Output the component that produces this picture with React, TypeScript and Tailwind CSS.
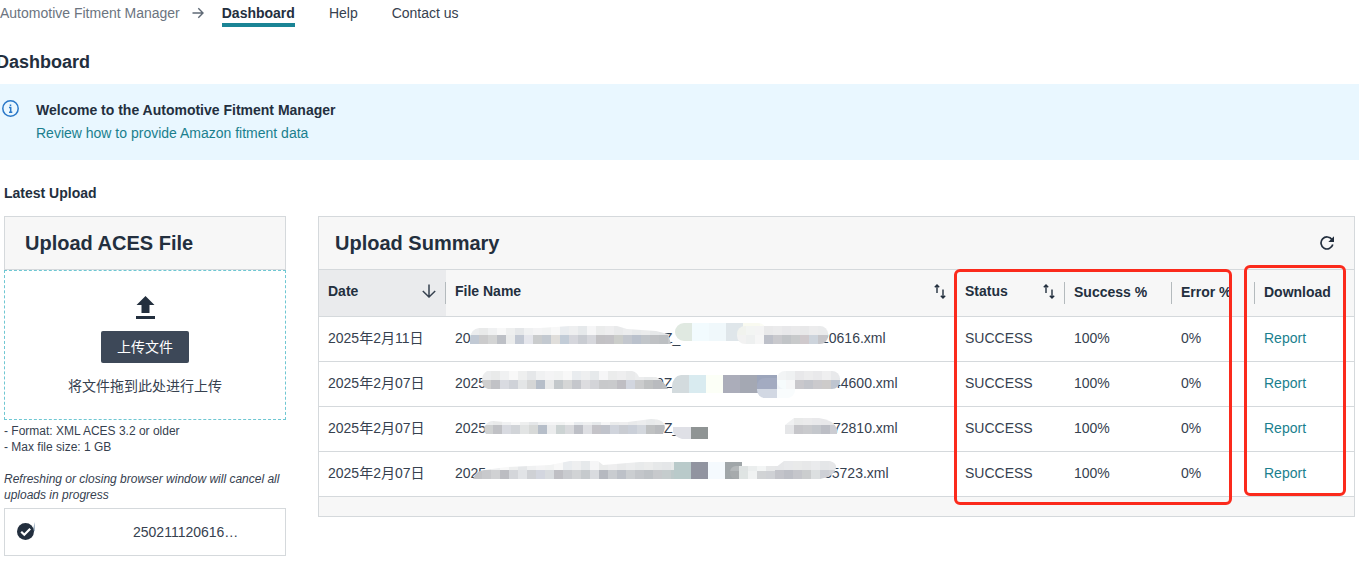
import React from 'react';

type Band = { h: number; colors: string[] };

type Strip = {
  x: number;
  y: number;
  w: number;
  cell: number;
  rx: number;
  // irregular edge, used instead of the rounded rectangle
  outline?: string;
  bands: Band[];
};

type Upload = {
  id: string;
  date: string;
  // visible pieces of the file name, each with the space it takes up
  name: { text: string; width: number }[];
  strips: Strip[];
};

const LIGHT = [
  '#ecedee', '#e9eaea', '#f0f1f2', '#f8f8f8', '#eeefef', '#e5e7e9', '#f0f1f2', '#f4f4f5',
  '#f2f3f3', '#f8f8f8', '#e9ecef', '#eeeff0', '#e6e9eb', '#f6f6f7', '#ebecec', '#eeeeef',
  '#e9eaeb', '#ecedee', '#e8eaeb', '#ebecec', '#e6e8e9', '#e4e6e8', '#e8eaea',
];

const uploads: Upload[] = [
  {
    id: 'u1',
    date: '2025年2月11日',
    name: [
      { text: '2025', width: 209 },
      { text: 'Z_', width: 157 },
      { text: '20616.xml', width: 66 },
    ],
    strips: [
      {
        x: 24, y: 9, w: 201, cell: 9, rx: 0,
        outline: 'M24 27V21Q25 12 33 11H94L124 9H171L181 12L210 14L222 17L225 27L222 32V27Z',
        bands: [
          { h: 9, colors: LIGHT },
          {
            h: 9,
            colors: [
              '#c1c9d4', '#cbcbcc', '#d3d4d4', '#bdc0c6', '#ebecec', '#c2c8d3', '#e5e6ec', '#cacccd',
              '#c3c9d0', '#e0dedb', '#c2ccd7', '#d5d6dc', '#c9ccd2', '#d6d7dc', '#c2c1c4', '#c3c2c6',
              '#cbcdca', '#c3c7ce', '#bac1cc', '#c1c5c9', '#bfc1c4', '#bcbfc2', '#c6c9cc',
            ],
          },
        ],
      },
      {
        x: 229, y: 6, w: 92, cell: 17, rx: 9,
        bands: [{ h: 18, colors: ['#e0e9e1', '#f2fbfe', '#f0f8fb', '#dfe6ea', '#f9faf0', '#fbfcf5'] }],
      },
      {
        x: 291, y: 9, w: 91, cell: 9, rx: 8,
        bands: [
          { h: 9, colors: ['#f1f3ee', '#f3f5f3', '#f4f4f4', '#e9e9ea', '#ebebec', '#e8e8ea', '#eaeaeb', '#e8e8e9', '#ececed', '#eaebec', '#e8e9ea'] },
          { h: 9, colors: ['#f2f2f2', '#eef0f0', '#f6f6f6', '#bdc0c9', '#c9c9cd', '#c1c4c7', '#c8cacb', '#cfc9cc', '#cdd4dc', '#c6c6ca', '#c9cacd'] },
        ],
      },
    ],
  },
  {
    id: 'u2',
    date: '2025年2月07日',
    name: [
      { text: '2025', width: 201 },
      { text: '9Z', width: 177 },
      { text: '44600.xml', width: 66 },
    ],
    strips: [
      {
        x: 36, y: 9, w: 186, cell: 9, rx: 0,
        outline: 'M42 27Q36 25 36 18Q36 12 41 9H186Q191 10 193 15L210 15Q218 19 222 27Z',
        bands: [
          { h: 9, colors: LIGHT },
          {
            h: 9,
            colors: [
              '#cfcfcf', '#c1c2c6', '#d9dbe1', '#cfd2d8', '#e3e5e6', '#d5d6d6', '#b6bec9', '#e9eaea',
              '#c3c8cb', '#d5d6d6', '#c5c7cc', '#dcdcdf', '#d3d4d8', '#c8c9cb', '#c9cacc', '#bfbec3',
              '#d2d6df', '#cbcccd', '#bfc1c2', '#b9bbbf', '#bcbec0',
            ],
          },
        ],
      },
      {
        x: 226, y: 13, w: 104, cell: 17, rx: 0,
        outline: 'M226 31V24Q227 14 235 13H331V31Z',
        bands: [{ h: 18, colors: ['#d3dbde', '#d9ebf0', '#fcfff7', '#abadba', '#a4a8b3', '#9ca5bb', '#9ca5bb'] }],
      },
      {
        x: 311, y: 16, w: 38, cell: 20, rx: 8,
        bands: [
          { h: 11, colors: ['#a3abc1', '#f0f4f8'] },
          { h: 9, colors: ['#d2d8e3', '#f9fcfd'] },
        ],
      },
      {
        x: 331, y: 9, w: 63, cell: 9, rx: 8,
        bands: [
          { h: 9, colors: ['#f2f4f5', '#eff1f2', '#e8e8ea', '#ececed', '#e9e9eb', '#efeff0', '#e8e9eb'] },
          { h: 9, colors: ['#f6fbfc', '#f6f7f8', '#c9c8cc', '#c3c5cb', '#cbcacd', '#cdcbca', '#bec5d0'] },
        ],
      },
    ],
  },
  {
    id: 'u3',
    date: '2025年2月07日',
    name: [
      { text: '2025', width: 209 },
      { text: 'Z_', width: 169 },
      { text: '72810.xml', width: 66 },
    ],
    strips: [
      {
        x: 38, y: 12, w: 181, cell: 9, rx: 0,
        outline: 'M40 27Q37 23 39 19Q42 14 47 14L58 15H182L205 12Q219 12 219 21L217 27Z',
        bands: [
          { h: 6, colors: LIGHT },
          {
            h: 9,
            colors: [
              '#cfd1d1', '#c0c1c5', '#d8dae0', '#d1d4d8', '#e2e4e4', '#d7d9d8', '#b6bec9', '#ebeced',
              '#ccd3d3', '#d9dadd', '#bdbfc6', '#dedfe3', '#c4c3c8', '#c0c3cb', '#d0d4dc', '#c9ccd2',
              '#cacfd8', '#d3d7dd', '#bfc1c2', '#b9bbbe', '#c3c5c7',
            ],
          },
        ],
      },
      {
        x: 227, y: 20, w: 35, cell: 18, rx: 0,
        outline: 'M227 20H262V32H236Q229 30 227 25Z',
        bands: [{ h: 12, colors: ['#dfe0e6', '#8f9494'] }],
      },
      {
        x: 339, y: 11, w: 52, cell: 9, rx: 0,
        outline: 'M339 27V18L348 11H373Q388 13 391 22V27Z',
        bands: [
          { h: 7, colors: ['#f0f1f2', '#e9eaea', '#ebebec', '#e9e9eb', '#e8e8ea', '#e6e7e9'] },
          { h: 9, colors: ['#e5e6e8', '#c6c6ca', '#c9cacd', '#c4c7cc', '#bcbec5', '#cbccd2'] },
        ],
      },
    ],
  },
  {
    id: 'u4',
    date: '2025年2月07日',
    name: [
      { text: '2025', width: 369 },
      { text: '35723.xml', width: 66 },
    ],
    strips: [
      {
        x: 27, y: 9, w: 206, cell: 9, rx: 0,
        outline: 'M27 27Q29 19 38 18L61 15L104 13L124 9H152L157 13L194 10H232V27Z',
        bands: [
          { h: 9, colors: LIGHT },
          {
            h: 9,
            colors: [
              '#c3c4c7', '#c8c9cc', '#d0d1d3', '#bcbdc2', '#d4d6da', '#e1e3e6', '#cfd1d5', '#d3d6df',
              '#d9dcdf', '#bfbfc4', '#c9cbcf', '#d1d3d5', '#c6cacd', '#d9dbdf', '#b6b9c0', '#c9ccd0',
              '#bdc1c8', '#cbced1', '#c3c6ca', '#bec2c6', '#c7c9cc', '#c5cccd', '#bdc9ca',
            ],
          },
        ],
      },
      {
        x: 228, y: 10, w: 68, cell: 17, rx: 0,
        bands: [{ h: 17, colors: ['#b9caca', '#9194a0', '#f5fafe', '#a0a6a9'] }],
      },
      {
        x: 284, y: 14, w: 60, cell: 9, rx: 6,
        bands: [
          { h: 5, colors: ['#b4b8ba', '#dfe3e3', '#ebeeee', '#f3f5f5', '#e7e8e9', '#e6e7e8', '#e5e6e8'] },
          { h: 8, colors: ['#a7abad', '#dfe4e3', '#f0f2f2', '#d1d3d5', '#cfd1d5', '#c5c6ca', '#cacbce'] },
        ],
      },
      {
        x: 329, y: 9, w: 61, cell: 9, rx: 0,
        outline: 'M329 27V16L338 9H384Q391 11 390 16Q388 24 378 26L374 27Z',
        bands: [
          { h: 9, colors: ['#e6e7e9', '#e8e9eb', '#e9eaea', '#e7e8e9', '#eaebed', '#e4e6e8', '#e6e7e9'] },
          { h: 9, colors: ['#c3c4ca', '#bdbfc6', '#c5c6cb', '#cbcdce', '#dcdfe0', '#ced0d6', '#d3d4d8'] },
        ],
      },
    ],
  },
];

const Mosaic: React.FC<{ id: string; strips: Strip[] }> = ({ id, strips }) => (
  <svg
    className="absolute left-0 top-0 pointer-events-none"
    width="450"
    height="44"
    aria-hidden="true"
  >
    {strips.map((s, i) => {
      const height = s.bands.reduce((sum, b) => sum + b.h, 0);
      let top = s.y;
      return (
        <g key={i} clipPath={`url(#${id}-${i})`} shapeRendering="crispEdges">
          <clipPath id={`${id}-${i}`}>
            {s.outline ? (
              <path d={s.outline} />
            ) : (
              <rect x={s.x} y={s.y} width={s.w} height={height} rx={s.rx} />
            )}
          </clipPath>
          {s.bands.map((band, b) => {
            const y = top;
            top += band.h;
            return band.colors.map((color, c) => (
              <rect
                key={`${b}-${c}`}
                x={s.x + c * s.cell}
                y={y}
                width={s.cell}
                height={band.h}
                fill={color}
              />
            ));
          })}
        </g>
      );
    })}
  </svg>
);

const SortIcon = () => (
  <svg width="12" height="15" viewBox="0 0 12 15" fill="none" stroke="#232f3e" strokeWidth="1.4">
    <path d="M3 9V1.5M0.8 3.3L3 1L5.2 3.3" />
    <path d="M9 5.5V13.5M6.8 11.7L9 14L11.2 11.7" />
  </svg>
);

const ArrowDownIcon = () => (
  <svg width="14" height="14" viewBox="0 0 14 14" fill="none" stroke="#36414f" strokeWidth="1.5">
    <path d="M7 0.5V13M0.8 7L7 13L13.2 7" />
  </svg>
);

const HeaderCell: React.FC<{
  label: string;
  icon?: React.ReactNode;
  divider?: boolean;
  active?: boolean;
}> = ({ label, icon, divider, active }) => (
  <th
    scope="col"
    className={`p-0 py-3 text-left font-bold text-[#232f3e] ${active ? 'bg-[#eaebed]' : ''}`}
  >
    <div
      className={`flex h-[22px] items-start justify-between whitespace-nowrap pl-[9px] ${
        icon ? 'leading-[18px]' : 'leading-5'
      } ${divider ? 'border-r border-[#b4babd]' : ''}`}
    >
      {label}
      {icon && (
        <button type="button" aria-label={`Sort by ${label}`} className="mr-[9px] pt-0.5">
          {icon}
        </button>
      )}
    </div>
  </th>
);

const Cell: React.FC<{ children: React.ReactNode }> = ({ children }) => (
  <td className="pt-[11px] pb-[13px] pl-[9px] leading-5">{children}</td>
);

const UploadPanel = () => (
  <section className="w-[282px] shrink-0">
    <div className="border border-[#d5d9dc] bg-[#f7f7f7] px-5 py-3">
      <h2 className="text-xl font-bold leading-7 text-[#232f3e]">Upload ACES File</h2>
    </div>
    <div className="flex flex-col items-center border border-dashed border-[#6fc7d2] pt-[25px] pb-[23px]">
      <svg width="19" height="23" viewBox="0 0 19 23" fill="#232f3e" aria-hidden="true">
        <path d="M9.5 0L18.5 9H13.5V17H5.5V9H0.5Z" />
        <rect y="20" width="19" height="3" />
      </svg>
      <button
        type="button"
        className="mt-3 rounded-xs bg-[#3d4858] px-4 py-1.5 leading-5 text-white"
      >
        上传文件
      </button>
      <p className="mt-[13px] leading-5">将文件拖到此处进行上传</p>
    </div>
    <div className="mt-[3px] text-xs leading-4">
      <p>- Format: XML ACES 3.2 or older</p>
      <p>- Max file size: 1 GB</p>
      <p className="mt-4 italic">
        Refreshing or closing browser window will cancel all uploads in progress
      </p>
    </div>
    <div className="mt-[5px] flex items-center border border-[#d5d9dc] px-3 py-[13px]">
      <svg width="19" height="20" viewBox="0 0 19 20" aria-label="Uploaded" role="img">
        <path d="M18 0V9L15 10Z" fill="#a9b9c8" />
        <circle cx="8.5" cy="9.5" r="8.5" fill="#232f3e" />
        <path d="M4.2 9.7L7.3 12.8L13.2 6.7" fill="none" stroke="#fff" strokeWidth="2.2" />
      </svg>
      <span className="ml-[97px] leading-5">250211120616…</span>
    </div>
  </section>
);

const SummaryPanel = () => (
  <section className="relative min-w-0 flex-1 border border-[#d5d9dc]">
    <div className="flex items-center justify-between border-b border-[#d5d9dc] bg-[#f7f7f7] py-3 pl-4 pr-5">
      <h2 className="text-xl font-bold leading-7 text-[#232f3e]">Upload Summary</h2>
      <button type="button" aria-label="Refresh">
        <svg width="14" height="14" viewBox="0 0 14 14" fill="none">
          <path d="M12 3.6A6 6 0 1 0 12.8 8.6" stroke="#232f3e" strokeWidth="1.7" />
          <path d="M14 0.3V6H8.3Z" fill="#232f3e" />
        </svg>
      </button>
    </div>
    <table className="w-full table-fixed border-collapse">
      <colgroup>
        <col className="w-[127px]" />
        <col />
        <col className="w-[109px]" />
        <col className="w-[107px]" />
        <col className="w-[83px]" />
        <col className="w-[99px]" />
      </colgroup>
      <thead className="bg-[#f7f7f7]">
        <tr>
          <HeaderCell label="Date" icon={<ArrowDownIcon />} divider active />
          <HeaderCell label="File Name" icon={<SortIcon />} divider />
          <HeaderCell label="Status" icon={<SortIcon />} divider />
          <HeaderCell label="Success %" divider />
          <HeaderCell label="Error %" divider />
          <HeaderCell label="Download" />
        </tr>
      </thead>
      <tbody>
        {uploads.map((u) => (
          <tr key={u.id} className="border-t border-[#d5d9dc]">
            <Cell>{u.date}</Cell>
            <td className="p-0">
              <div className="relative flex pt-[11px] pb-[13px] pl-[9px] leading-5">
                {u.name.map((part) => (
                  <span key={part.text} className="shrink-0" style={{ width: part.width }}>
                    {part.text}
                  </span>
                ))}
                <Mosaic id={u.id} strips={u.strips} />
              </div>
            </td>
            <Cell>SUCCESS</Cell>
            <Cell>100%</Cell>
            <Cell>0%</Cell>
            <Cell>
              <a href="#report" className="text-[#1a7f8e]">
                Report
              </a>
            </Cell>
          </tr>
        ))}
      </tbody>
    </table>
    <div className="h-5 border-t border-[#d5d9dc] bg-[#f7f7f7]" />
    {/* highlighted column groups */}
    <div className="pointer-events-none absolute right-[122px] top-[52px] h-[236px] w-[278px] rounded-md border-3 border-[#fb2a1c]" />
    <div className="pointer-events-none absolute right-2 top-12 h-[231px] w-[102px] rounded-md border-3 border-[#fb2a1c]" />
  </section>
);

const App: React.FC = () => {
  return (
    <div className="overflow-x-hidden bg-white font-['Liberation_Sans','Noto_Sans_CJK_SC',sans-serif] text-sm text-[#36414f]">
      <nav className="flex items-start pt-[3px] leading-5">
        <a href="#home" className="text-[#6b7480]">
          Automotive Fitment Manager
        </a>
        <svg
          className="ml-3 mt-1"
          width="12"
          height="12"
          viewBox="0 0 12 12"
          fill="none"
          stroke="#5f6975"
          strokeWidth="1.4"
          aria-hidden="true"
        >
          <path d="M0.5 6H11M6.3 1.2L11 6L6.3 10.8" />
        </svg>
        <div className="ml-[18px] flex gap-[34px]">
          <a
            href="#dashboard"
            aria-current="page"
            className="border-b-4 border-[#1a8495] font-bold text-[#232f3e]"
          >
            Dashboard
          </a>
          <a href="#help">Help</a>
          <a href="#contact">Contact us</a>
        </div>
      </nav>

      <h1 className="-ml-1 mt-[23px] text-lg font-bold leading-6 text-[#232f3e]">Dashboard</h1>

      <div className="mt-2.5 flex items-start bg-[#e9f7ff] pt-[15px] pb-[15px] pl-0.5">
        <svg
          className="mt-px"
          width="17"
          height="17"
          viewBox="0 0 17 17"
          fill="none"
          stroke="#2a78c8"
          strokeWidth="1.5"
          aria-hidden="true"
        >
          <circle cx="8.5" cy="8.5" r="7.7" />
          <path d="M7 7.5H8.7V12.2M7 12.2H10.3M8.5 4.5V6" />
        </svg>
        <div className="ml-[17px] leading-[23px]">
          <p className="font-bold text-[#232f3e]">Welcome to the Automotive Fitment Manager</p>
          <a href="#guide" className="text-[#1a7f8e]">
            Review how to provide Amazon fitment data
          </a>
        </div>
      </div>

      <main className="px-1">
        <h3 className="mt-[23px] font-bold leading-5 text-[#232f3e]">Latest Upload</h3>
        <div className="mt-[13px] flex items-start gap-8">
          <UploadPanel />
          <SummaryPanel />
        </div>
      </main>
    </div>
  );
};

export default App;
